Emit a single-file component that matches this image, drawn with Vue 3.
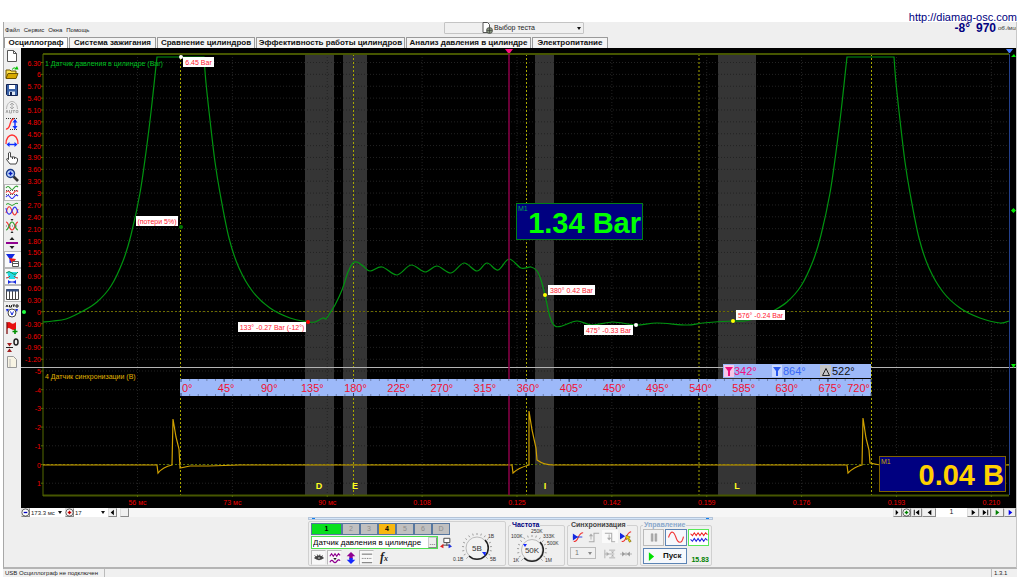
<script setup>
import { ref } from 'vue'

const menu = ['Файл', 'Сервис', 'Окна', 'Помощь']
const tabs = [
  { t: 'Осциллограф', w: 64 },
  { t: 'Система зажигания', w: 87 },
  { t: 'Сравнение цилиндров', w: 98 },
  { t: 'Эффективность работы цилиндров', w: 149 },
  { t: 'Анализ давления в цилиндре', w: 125 },
  { t: 'Электропитание', w: 76 },
]
const activeTab = ref(0)
const sensor = ref('Датчик давления в цилиндре')

/* icon parts: d = path, s = stroke, f = fill, w = stroke width, a = dash array */
const tools = [
  { n: 'Новый', p: [{ d: 'M2.5 1.5h6l3 3v8h-9z', s: '#555', f: '#fff' }, { d: 'M8.500 1.500v3h3', s: '#555' }] },
  { n: 'Открыть', p: [{ d: 'M1 4h4l1 1h5v7H1z', s: '#6b5200', f: '#ffe14a' }, { d: 'M1 12.500l2-5h10l-2 5z', s: '#6b5200', f: '#d8a800' }, { d: 'M7 3.500q2-3 4-1', s: '#00c000' }, { d: 'M9.500 3.500h4L12 0z', f: '#00c000' }] },
  { n: 'Сохранить', p: [{ d: 'M1.500 1.500h11v11h-10l-1-1z', s: '#102050', f: '#3a62a8' }, { d: 'M4 2h6v4H4z', f: '#fff' }, { d: 'M4 8.500h6V12H4z', f: '#dfe8f4' }, { d: 'M5 9h2v3H5z', f: '#102050' }] },
  { n: 'Авто', p: [{ d: 'M1.500 9C2-1 12-1 12.500 9', s: '#b5b5b5' }, { d: 'M7 3v6M5 5l2-2 2 2M5 7l2 2 2-2M1 13l1-3 1 3M4.500 10v3h2v-3M7.500 10.500h2.500M8.700 10v3M11 10.500h2v2h-2z', s: '#aaa' }] },
  { n: 'Амплитуда', p: [{ d: 'M1 12c5 1 3-10 8-10.500', s: '#ff3030', w: 1.4 }, { d: 'M1 1.500h12M5 12.500h8', s: '#333', a: '1 1' }, { d: 'M10 3v8', s: '#1030ff', w: 1.4 }, { d: 'M7.500 5.500L10 2l2.500 3.500zM7.500 9l2.500 3.500L12.500 9z', f: '#1030ff' }] },
  { n: 'Период', p: [{ d: 'M1 10C1-2 13-2 13 10', s: '#ff3030', w: 1.3 }, { d: 'M3 10.500h8', s: '#1030ff', w: 1.4 }, { d: 'M1.500 10.500l3-2.500v5zM12.500 10.500l-3-2.500v5z', f: '#1030ff' }] },
  { n: 'Рука', p: [{ d: 'M5 13L1.500 8.500q0-2 2 0V2q1.500-2 2 0v4q3-1 7 1.500V10l-1.500 3z', s: '#444', f: '#fff' }, { d: 'M7.500 6v2M9.500 6v2', s: '#444' }] },
  { n: 'Масштаб', p: [{ d: 'M8.500 8.500l4.500 4.500', s: '#333', w: 2.6 }, { d: 'M1.500 5.500a4 4 0 1 0 8 0a4 4 0 1 0-8 0z', s: '#1c3c88', f: '#c7dcff', w: 1.4 }, { d: 'M3.500 5.500h4M5.500 3.500v4', s: '#0018c0', w: 1.5 }] },
  { n: 'Линии', on: 1, p: [{ d: 'M1 3q2-3 4 0t4 0t4-1', s: '#30a030', w: 1.2 }, { d: 'M1 7.500q2-3 4 0t4 0t4-1', s: '#f03030', w: 1.2 }, { d: 'M1 12q2-3 4 0t4 0t4-1', s: '#3030f0', w: 1.2 }, { d: 'M1 5.500h12M1 9.500h12', s: '#555', a: '1 1' }] },
  { n: 'Наложение', p: [{ d: 'M1 2.500q2-2 4 0t4 0t4-1', s: '#30a030' }, { d: 'M1 11C3 3 5 3 7 9S11 14 13 7', s: '#f03030', w: 1.1 }, { d: 'M1 6C2 13 5 14 7 9S11 3 13 11', s: '#3030f0', w: 1.1 }] },
  { n: 'Центр', p: [{ d: 'M1 3C4 3 4 11 7 11S10 3 13 3', s: '#f03030', w: 1.2 }, { d: 'M1 11C4 11 4 3 7 3S10 11 13 11', s: '#30a030', w: 1.2 }, { d: 'M1 7h12', s: '#777', a: '1 1' }, { d: 'M5.500 0h3L7 2zM5.500 14h3L7 12z', f: '#222' }] },
  { n: 'Сдвиг', p: [{ d: 'M1 7h12', s: '#900090', w: 2 }, { d: 'M7 1L4.500 4h5zM4.500 10h5L7 13z', f: '#222' }] },
  { n: 'Фильтр', on: 1, p: [{ d: 'M1 1h9L6.500 6v4h-2V6z', f: '#1428e0' }, { d: 'M4 5l7 1-2 3 3 3-5-2z', f: '#f01818' }, { d: 'M7.500 8.500h6v5h-6zM7.500 10.500h6', s: '#555', f: '#fff' }] },
  { n: 'Сигнал', on: 1, p: [{ d: 'M2 2h10L10 9H4z', f: '#28dce6' }, { d: 'M1 3q3-3 6 0t6-1', s: '#0a9050' }, { d: 'M1 8q3 0 4-2M13 8q-3 0-4-2', s: '#d02020' }, { d: 'M5 12h4', s: '#1428e0' }, { d: 'M3 10l3 2-3 2zM11 10l-3 2 3 2z', f: '#1428e0' }] },
  { n: 'Таблица', on: 1, p: [{ d: 'M1.500 2.500h12v10h-12zM4.500 4v8M7.500 4v8M10.500 4v8', s: '#444', f: '#fff' }, { d: 'M1.500 2h12v2.500h-12z', f: '#385080' }] },
  { n: 'Авто прибор', p: [{ d: 'M3 9a4 4 0 1 0 8 0a4 4 0 1 0-8 0z', s: '#444', f: '#fff' }, { d: 'M5.500 7.500L7 11l1.500-3.500', s: '#1428e0' }, { d: 'M1 3l1-2 1 2M4.500 1v2h2V1M7.500 1h2.500M8.700 1v2M11 1h2v2h-2z', s: '#222' }, { d: 'M2 8L1 5h3zM12 8l1-3h-3z', f: '#1428e0' }] },
  { n: 'Флаг', p: [{ d: 'M2 2q2-2 4 0t5-1v7q-2 2-5 0t-4 0z', f: '#e81010' }, { d: 'M2 1v12', s: '#801010', w: 1.3 }, { d: 'M10 8v5M7.500 10.500h5', s: '#009000', w: 1.6 }] },
  { n: 'Ноль', p: [{ d: 'M1 9.500h7', s: '#222' }, { d: 'M2 5h5L4.500 8.500zM2 14h5l-2.500-3.500z', f: '#a02020' }, { d: 'M9 4q0-3 2-3t2 3-2 3-2-3z', s: '#222', w: 1.5 }] },
  { n: 'Отчёт', p: [{ d: 'M2.500 1.500h6l3 3v8h-9z', s: '#999', f: '#f8f4e4' }, { d: 'M4 5h2M4 7h2M4 9h2M4 11h2', s: '#bbb' }] },
]

/* ---- oscillogram geometry ---- */
function smooth(p) {
  let d = `L${p[0]}`
  for (let i = 0; i < p.length - 1; i++) {
    const a = p[i - 1] || p[i], b = p[i], c = p[i + 1], e = p[i + 2] || c
    d += `C${b[0] + (c[0] - a[0]) / 6} ${b[1] + (c[1] - a[1]) / 6} ${c[0] - (e[0] - b[0]) / 6} ${c[1] - (e[1] - b[1]) / 6} ${c}`
  }
  return d
}
const rise = [[83, 311], [97, 302], [111, 286], [123, 261], [131, 235], [140, 193], [146, 152], [151, 112], [156, 66], [157, 57]]
const fall = [[204, 57], [206, 83], [210, 120], [215, 162], [220, 193], [229, 238], [239, 268], [253, 292], [270, 308], [290, 318], [308, 322]]
const mid = [[308, 322], [315, 322], [323, 318], [326, 319], [330, 313], [335, 305], [342, 290], [348, 272], [353, 263], [357, 262], [363, 266], [370, 271], [382, 267], [397, 275], [411, 265], [425, 272], [437, 266], [451, 273], [464, 263], [477, 271], [487, 263], [498, 270], [509, 259], [521, 268], [531, 267], [537, 271], [541, 280], [545, 295], [550, 317], [555, 326], [562, 326], [577, 321], [592, 325], [613, 322], [636, 325], [657, 323], [687, 325], [703, 323], [733, 321], [745, 321], [760, 317], [773, 311]]
const sh = (a, n) => a.map(([x, y]) => [x + n, y])
const pressure =
  'M43 322' + smooth([[43, 322], [53, 321], [66, 319], ...rise]) + smooth(fall) + smooth(mid) +
  smooth(sh(rise, 690)) + smooth([...sh(fall.slice(0, -2), 690), [980, 318], [1000, 323], [1009, 321]])
const sync =
  'M43 465H157L158 473Q163 467 172 465L173 419L176 437L179 449L180 468L190 466H208L240 465H512L513 473Q518 468 529 465V411L532 430L536 448L537 460Q544 465 553 465H847L848 473Q854 467 862 465L863 418L866 438L869 450L870 463L880 465H1009'

const yTop = Array.from({ length: 26 }, (_, i) => {
  const v = Math.round((6.3 - i * 0.3) * 100) / 100
  return { y: 62.5 + i * 11.87, t: Number.isInteger(v) ? String(Math.abs(v)) : v.toFixed(2) }
})
const yLow = [-5, -4, -3, -2, -1, 0, 1].map((t, i) => ({ t, y: 371 + i * 18.7 }))
const xs = ['56 мс', '73 мс', '90 мс', '0.108', '0.125', '0.142', '0.159', '0.176', '0.193', '0.210'].map((t, i) => ({ t, x: 137.5 + i * 94.87 }))
const bands = [
  { x: 305, w: 29, t: 'D', c: 319 },
  { x: 343, w: 24, t: 'E', c: 355 },
  { x: 535, w: 19, t: 'I', c: 545 },
  { x: 718, w: 38, t: 'L', c: 737 },
]
const phases = [180.5, 353.5, 526.5, 699, 871.5]
const degs = Array.from({ length: 17 }, (_, i) => ({ t: i * 45 + '°', x: 181 + i * 43.13 }))
const ticks = Array.from({ length: 79 }, (_, i) => 181 + (i + 1) * 8.626)
const notes = [
  { x: 183, y: 57, w: 31, t: '6.45 Bar' },
  { x: 136, y: 216, w: 42, t: '(потери 5%)' },
  { x: 238, y: 322, w: 68, t: '133° -0.27 Bar (-12°)' },
  { x: 548, y: 285, w: 47, t: '380° 0.42 Bar' },
  { x: 584, y: 325, w: 49, t: '475° -0.33 Bar' },
  { x: 736, y: 310, w: 49, t: '576° -0.24 Bar' },
]
const dots = [
  [181, 57, '#fff'], [181, 227, '#007800'], [308, 322, '#f00'], [545, 295, '#ff0'], [636, 325, '#fff'], [733, 321, '#ff0'],
]

/* ---- bottom panel ---- */
const channels = [1, 2, 3, 4, 5, 6, 'D']
const views = [
  { n: 'Показать', p: [{ d: 'M1 7q6-6 12 0q-6 5-12 0z', f: '#444' }, { d: 'M2 4l2 2M5 3l1 2M8 3v2M11 4l-1 2', s: '#222' }, { d: 'M6 7h2', s: '#fff' }], on: 1 },
  { n: 'Фильтр', p: [{ d: 'M1 5l2-3 2 3 2-3 2 3 2-3 2 2M1 12q2-4 4-1t4 0 4-1', s: '#900090', w: 1.4 }, { d: 'M5 7h4l-2 2.500z', f: '#222' }], on: 1 },
  { n: 'Инверсия', p: [{ d: 'M7 0l5 5H9v3H5V5H2z', f: '#900090' }, { d: 'M7 14l5-5H9V7H5v2H2z', f: '#1428ff' }] },
  { n: 'Линии', p: [{ d: 'M1 2.500h12M1 12.500h12', s: '#555' }, { d: 'M1 7.500h12', s: '#555', a: '1 1' }], on: 1 },
]
const syncIcons = [
  { n: 'Фронт', p: [{ d: 'M2 12C8 14 6 2 13 2', s: '#f03030', w: 1.2 }, { d: 'M1 7h11', s: '#1428e0' }, { d: 'M1 3l6 4-6 4z', f: '#1428e0' }] },
  { n: 'По возрастанию', p: [{ d: 'M1 12.500h6v-10h6', s: '#aaa', w: 1.2 }, { d: 'M3.500 5v5', s: '#aaa' }, { d: 'M1 6l2.500-3L6 6z', f: '#aaa' }] },
  { n: 'По спаду', on: 1, p: [{ d: 'M1 2.500h8v10h4', s: '#aaa', w: 1.2 }, { d: 'M6 4v5', s: '#aaa' }, { d: 'M3.500 8L6 11l2.500-3z', f: '#aaa' }] },
  { n: 'Выбор', p: [{ d: 'M2 12C8 14 6 2 13 1', s: '#f03030', w: 1.2 }, { d: 'M0 2l6 4-6 4z', f: '#1428e0' }, { d: 'M7 5l5 2-2 1 3 4-2 1-2-4-2 1z', s: '#665500', f: '#ffe000', w: 0.7 }] },
]
const shiftIcons = [
  { n: 'Уровень', p: [{ d: 'M1 2v10M1 7h11M6 2.500h7M6 11.500h7', s: '#aaa' }, { d: 'M3 4.500v5L6 7zM8 4h4l-2 2zM8 10h4l-2-2z', f: '#aaa' }] },
  { n: 'Смещение', p: [{ d: 'M0 7h14M7 5v4', s: '#aaa' }, { d: 'M6 7L2.500 4v6zM8 7l3.500-3v6z', f: '#999' }] },
]
function dial(from, to, n, r1, r2) {
  let d = ''
  for (let i = 0; i <= n; i++) {
    const a = ((from + ((to - from) * i) / n) * Math.PI) / 180
    d += `M${Math.cos(a) * r1} ${Math.sin(a) * r1}L${Math.cos(a) * r2} ${Math.sin(a) * r2}`
  }
  return d
}
const dialMarks = dial(-225, 45, 16, 13, 15)
const nav = [
  { n: 'Вправо', w: 9, d: 'M3 2l3 3-3 3z', c: '#000' },
  { n: 'Метка', w: 9, ring: 1 },
  { n: 'В начало', w: 11, d: 'M2 2h1v6H2zM8 2v6L4 5z', c: '#000' },
  { n: 'Назад', w: 14, d: 'M7 2v6L3 5z', c: '#000' },
]
const nav2 = [
  { n: 'Вперёд', w: 12, d: 'M3 2v6l4-3z', c: '#000' },
  { n: 'В конец', w: 12, d: 'M2 2v6l4-3zM7 2h1v6H7z', c: '#000' },
  { n: 'Воспроизвести', w: 13, d: 'M3 2v6l4-3z', c: '#008000' },
  { n: 'Воспроизвести всё', w: 12, d: 'M3 2v6l4-3z', c: '#0000f0' },
]
</script>

<template>
  <div class="page">
    <header class="brand"><a href="#">http://diamag-osc.com</a></header>
    <main class="win">
      <div class="head">
        <nav class="menu"><button v-for="m in menu" :key="m">{{ m }}</button></nav>
        <label class="test">
          <svg viewBox="0 0 12 12" class="i12"><path d="M2 .5h4.500l2 2v8H2z" fill="#fff" stroke="#555" /><circle cx="8.500" cy="8.500" r="3" fill="#8a9a80" stroke="#444" stroke-width=".8" /><path d="M6 8.500h5M8.500 6v5" stroke="#333" stroke-width=".6" /></svg>
          <select aria-label="Выбор теста"><option>Выбор теста</option></select>
          <i class="caret"></i>
        </label>
        <div class="rpm"><b>-8°</b><b>970</b><span>об./мин</span></div>
      </div>
      <div class="tabs" role="tablist">
        <button v-for="(t, i) in tabs" :key="t.t" role="tab" :class="{ on: i === activeTab }" :style="{ width: t.w + 'px' }" @click="activeTab = i">{{ t.t }}</button>
      </div>

      <section class="work">
        <aside class="tools">
          <button v-for="t in tools" :key="t.n" :class="{ on: t.on }" :aria-label="t.n">
            <svg viewBox="0 0 14 14"><path v-for="(p, k) in t.p" :key="k" :d="p.d" :stroke="p.s || 'none'" :fill="p.f || 'none'" :stroke-width="p.w || 1" :stroke-dasharray="p.a" /></svg>
          </button>
        </aside>
        <div class="stage">
          <svg class="scope" viewBox="21 48 995 460" role="img" aria-label="Осциллограмма">
            <rect x="21" y="48" width="995" height="460" fill="#000" />
            <rect v-for="b in bands" :key="b.t" :x="b.x" y="54" :width="b.w" height="442" fill="#353535" />
            <g stroke="#232323" stroke-dasharray="1 2">
              <path v-for="l in yTop" :key="'a' + l.y" :d="`M43 ${l.y}H1009`" />
              <path v-for="l in yLow" :key="'b' + l.y" :d="`M43 ${l.y}H1009`" />
              <path v-for="l in xs" :key="'c' + l.x" :d="`M${l.x} 54V495`" />
            </g>
            <path d="M43 311.500H1009" stroke="#6c6c00" stroke-dasharray="2 2" />
            <path d="M43 464.500H1009" stroke="#5a6c00" stroke-dasharray="2 2" />
            <path v-for="x in phases" :key="x" :d="`M${x} 54V495`" stroke="#a8a800" stroke-dasharray="2 2" />
            <path d="M43 54H1009M43 495.500H1009" stroke="#465600" stroke-width="2" />
            <path d="M43 54V496" stroke="#556b00" stroke-width="1" />
            <g stroke="#556b00">
              <path v-for="l in yTop" :key="'t' + l.y" :d="`M41 ${l.y}h2`" />
              <path v-for="l in yLow" :key="'u' + l.y" :d="`M41 ${l.y}h2`" />
              <path v-for="l in xs" :key="'v' + l.x" :d="`M${l.x} 495v2`" />
            </g>
            <g class="axis">
              <text v-for="l in yTop" :key="l.y" x="41" :y="l.y + 3" text-anchor="end">{{ l.t }}</text>
              <text v-for="l in yLow" :key="l.y" x="41" :y="l.y + 3" text-anchor="end">{{ l.t }}</text>
              <text v-for="l in xs" :key="l.x" :x="l.x" y="505" text-anchor="middle">{{ l.t }}</text>
            </g>
            <text class="title" x="45" y="66" fill="#00c020">1 Датчик давления в цилиндре (Bar)</text>
            <text class="title" x="45" y="379" fill="#e0b400">4 Датчик синхронизации (В)</text>
            <path :d="pressure" fill="none" stroke="#009410" stroke-width="1.200" />
            <path :d="sync" fill="none" stroke="#cfa000" stroke-width="1.200" />
            <path d="M21 367.500H1016" stroke="#b4b4b4" />
            <path d="M509 54V495" stroke="#8c0048" stroke-width="1.500" />
            <path d="M505 49h8l-3 4h-2z" fill="#ff1080" />
            <path d="M1009.500 54V495" stroke="#24408c" />
            <path d="M1006 49h7l-3 4h-1z" fill="#4880ff" />
            <path d="M1011 57h5l-2-3zM1011 364h5l-2.500 4zM1011 210.500l2.500-2.500 2.500 2.500-2.500 2.500z" fill="#00e800" />
            <circle cx="24" cy="312" r="2" fill="#20ff40" />
            <g class="zone"><text v-for="b in bands" :key="b.t" :x="b.c" y="489" text-anchor="middle">{{ b.t }}</text></g>

            <rect x="180" y="379" width="691" height="17" fill="#9db9f9" />
            <path v-for="x in ticks" :key="x" :d="`M${x} 379v2M${x} 394v2`" stroke="#6c7fae" />
            <path v-for="d in degs" :key="'d' + d.t" :d="`M${d.x} 379v3M${d.x} 393v3`" stroke="#304070" />
            <g class="deg">
              <text v-for="(d, i) in degs" :key="d.t" :x="i === 0 ? 182 : i === 16 ? 870 : d.x + 2" y="392" :text-anchor="i === 0 ? 'start' : i === 16 ? 'end' : 'middle'">{{ d.t }}</text>
            </g>
            <rect x="723" y="364" width="148" height="14" fill="#9db9f9" />
            <rect x="724" y="365" width="10" height="12" fill="#f6c8e8" />
            <rect x="772" y="365" width="10" height="12" fill="#c8d8ff" />
            <rect x="820" y="365" width="11" height="12" fill="#c4c4c4" />
            <path d="M725 367h8l-3 4v5h-2v-5z" fill="#f01080" />
            <path d="M773 367h8l-3 4v5h-2v-5z" fill="#2858f0" />
            <path d="M822.500 375.500h7l-3.500-7z" fill="none" stroke="#222" />
            <g class="deg">
              <text x="734" y="375" class="pink">342°</text>
              <text x="783" y="375" class="blue">864°</text>
              <text x="832" y="375" class="dark">522°</text>
            </g>

            <g v-for="n in notes" :key="n.t">
              <rect :x="n.x" :y="n.y" :width="n.w" height="10" fill="#fff" />
              <text class="note" :x="n.x + n.w / 2" :y="n.y + 8" text-anchor="middle">{{ n.t }}</text>
            </g>
            <circle v-for="d in dots" :key="d[0] + d[1]" :cx="d[0]" :cy="d[1]" r="2" :fill="d[2]" />

            <rect x="516.500" y="203.500" width="126" height="36" fill="#000080" stroke="#008018" />
            <text class="m1" x="518" y="211" fill="#00a850">M1</text>
            <text class="big" x="641" y="233" text-anchor="end" fill="#00ff00">1.34 Bar</text>
            <rect x="879.500" y="456.500" width="126" height="35" fill="#000080" stroke="#806400" />
            <text class="m1" x="881" y="464" fill="#c8a800">M1</text>
            <text class="big" x="1004" y="485" text-anchor="end" fill="#ffd000">0.04 В</text>
          </svg>

          <div class="strip">
            <button class="sq" aria-label="Уменьшить"><svg viewBox="0 0 10 10"><circle cx="5" cy="5" r="4" fill="#fff" stroke="#333" stroke-width=".8" /><path d="M3 5h4" stroke="#0000c0" stroke-width="1.500" /></svg></button>
            <span class="pick w36"><select aria-label="Развёртка"><option>173.3 мс</option></select><i class="caret"></i></span>
            <button class="sq" aria-label="Увеличить"><svg viewBox="0 0 10 10"><circle cx="5" cy="5" r="4" fill="#fff" stroke="#333" stroke-width=".8" /><path d="M3 5h4M5 3v4" stroke="#c00000" stroke-width="1.500" /></svg></button>
            <span class="pick w34"><select aria-label="Деление"><option>17</option></select><i class="caret"></i></span>
            <button class="sq" aria-label="Влево"><svg viewBox="0 0 10 10"><path d="M6.500 2v6L3 5z" /></svg></button>
            <div class="track"><button class="thumb" aria-label="Прокрутка"></button></div>
            <button v-for="b in nav" :key="b.n" class="sq" :style="{ width: b.w + 'px' }" :aria-label="b.n">
              <svg viewBox="0 0 10 10"><path v-if="b.d" :d="b.d" :fill="b.c" /><template v-else><circle cx="5" cy="5" r="4" fill="#fff" stroke="#333" stroke-width=".8" /><path d="M5 3v4M3 5h4" stroke="#008000" stroke-width="1.500" /></template></svg>
            </button>
            <output class="pageno">1</output>
            <button v-for="b in nav2" :key="b.n" class="sq" :style="{ width: b.w + 'px' }" :aria-label="b.n"><svg viewBox="0 0 10 10"><path :d="b.d" :fill="b.c" /></svg></button>
          </div>
        </div>
      </section>

      <section class="dock">
        <div class="grip"><i></i><i></i></div>
        <div class="groups">
          <fieldset class="chan">
            <div class="left">
              <div class="nums"><button v-for="c in channels" :key="c" :class="'c' + c">{{ c }}</button></div>
              <div class="sensor">
                <div class="field"><input v-model="sensor" aria-label="Датчик" /><button aria-label="Выбрать датчик">...</button></div>
                <svg viewBox="0 0 14 14" class="i12"><path d="M4.500 1.500h7v5h-7zM3 9.500h9M8 7v3" fill="#fff" stroke="#333" /><path d="M0 11l4-3v5z" fill="#e02020" /><path d="M14 11l-4-3v5z" fill="#2030e0" /></svg>
              </div>
              <div class="row">
                <button v-for="t in views" :key="t.n" :class="{ on: t.on }" :aria-label="t.n"><svg viewBox="0 0 14 14" class="i12"><path v-for="(p, k) in t.p" :key="k" :d="p.d" :stroke="p.s || 'none'" :fill="p.f || 'none'" :stroke-width="p.w || 1" :stroke-dasharray="p.a" /></svg></button>
                <button class="fx"><i>f<small>x</small></i></button>
              </div>
            </div>
            <label class="knob">
              <svg viewBox="-24 -20 50 38">
                <path :d="dialMarks" stroke="#888" stroke-width=".8" />
                <circle r="11" fill="#f2f2f2" stroke="#bbb" />
                <path d="M-8 8A11 11 0 0 0 8-8" fill="none" stroke="#222" stroke-width="1.500" />
                <text class="val" y="3" text-anchor="middle">5В</text>
                <path d="M5 4l4 0-1 4z" fill="#1428ff" />
                <text x="11" y="-10">1В</text><text x="13" y="13">5В</text><text x="-24" y="13">0.1В</text>
              </svg>
              <input type="range" aria-label="Предел" />
            </label>
          </fieldset>
          <fieldset>
            <legend class="navy">Частота</legend>
            <label class="knob">
              <svg viewBox="-27 -21 56 36">
                <path :d="dialMarks" stroke="#888" stroke-width=".8" />
                <circle r="10.500" fill="#f2f2f2" stroke="#bbb" />
                <path d="M-8 8A11 11 0 0 0 8-8" fill="none" stroke="#222" stroke-width="1.500" />
                <text class="val" y="3" text-anchor="middle">50K</text>
                <path d="M-9-6h4l-2 3z" fill="#1428ff" />
                <text x="-21" y="-12">100K</text><text x="-1" y="-17">250K</text><text x="11" y="-12">333K</text><text x="15" y="-5">500K</text><text x="-19" y="12">1K</text><text x="13" y="12">1M</text>
              </svg>
              <input type="range" aria-label="Частота" />
            </label>
          </fieldset>
          <fieldset>
            <legend>Синхронизация</legend>
            <div class="grid4">
              <button v-for="t in syncIcons" :key="t.n" :class="{ lit: t.on }" :aria-label="t.n"><svg viewBox="0 0 14 14" class="i12"><path v-for="(p, k) in t.p" :key="k" :d="p.d" :stroke="p.s || 'none'" :fill="p.f || 'none'" :stroke-width="p.w || 1" /></svg></button>
              <span class="pick num"><select aria-label="Канал"><option>1</option></select><i class="caret"></i></span>
              <button v-for="t in shiftIcons" :key="t.n" :aria-label="t.n"><svg viewBox="0 0 14 14" class="i12"><path v-for="(p, k) in t.p" :key="k" :d="p.d" :stroke="p.s || 'none'" :fill="p.f || 'none'" /></svg></button>
            </div>
          </fieldset>
          <fieldset>
            <legend class="pale">Управление</legend>
            <div class="ctrl">
              <button class="dim" aria-label="Пауза"><svg viewBox="0 0 18 16"><path d="M6 4h2v8H6zM10 4h2v8h-2z" fill="#aaa" stroke="#999" stroke-width=".5" /></svg></button>
              <button class="blueb" aria-label="Синус"><svg viewBox="0 0 18 16"><path d="M1 8C4-1 7 2 9 8s6 8 8-1" fill="none" stroke="#f03838" stroke-width="1.200" /></svg></button>
              <button class="greenb" aria-label="Каналы"><svg viewBox="0 0 18 16"><path d="M0 4l2 2 2-3 2 3 2-3 2 3 2-3 2 3 2-3 2 2" fill="none" stroke="#f02020" stroke-width="1.100" /><path d="M0 10l2 2 2-3 2 3 2-3 2 3 2-3 2 3 2-3 2 2" fill="none" stroke="#2020e0" stroke-width="1.100" /></svg></button>
              <button class="blueb start"><svg viewBox="0 0 8 10"><path d="M1 0l6 5-6 5z" fill="#00e000" /></svg>Пуск</button>
              <b class="fps">15.83</b>
            </div>
          </fieldset>
        </div>
      </section>
    </main>
    <footer class="status"><span>USB Осциллограф не подключен</span><span>1.3.1</span></footer>
  </div>
</template>

<style>
html, body { background: #fff; }
</style>

<style scoped>
.page { font: 7px/8px "Liberation Sans", Arial, sans-serif; color: #222; padding: 0 7px 3px 3px; }
.page * { box-sizing: border-box; }
button { font: inherit; color: inherit; padding: 0; margin: 0; border: 0; background: none; display: flex; align-items: center; justify-content: center; }
svg { display: block; }
select { font: inherit; color: inherit; appearance: none; border: 0; background: none; padding: 0; margin: 0; width: 100%; outline: 0; }
.i12 { width: 12px; height: 12px; flex: none; }
.caret { width: 0; height: 0; border: 2px solid transparent; border-top: 3px solid #111; border-bottom: 0; flex: none; }

.brand { height: 22px; display: flex; justify-content: flex-end; align-items: flex-end; }
.brand a { font-size: 11px; line-height: 10px; color: #000080; text-decoration: none; }
.win { background: #efefef; border-left: 1px solid #a8a8a8; border-right: 1px solid #c8c8c8; border-bottom: 2px solid #b4b4b4; }
.head { display: grid; grid-template-columns: 1fr 140px 1fr; height: 15px; }
.menu { display: flex; gap: 4px; align-items: flex-end; padding: 0 0 3px 1px; font-size: 6px; }
.menu button { line-height: 8px; }
.test { display: flex; align-items: center; height: 12px; margin-left: 4px; margin-right: -4px; border: 1px solid #c4c4c4; border-radius: 1px; padding: 0 2px 0 36px; background: #f0f0f0; font-size: 7px; gap: 1px; }
.rpm { display: flex; justify-content: flex-end; align-items: center; color: #000080; font-size: 12px; line-height: 12px; gap: 6px; height: 12px; white-space: nowrap; }
.rpm span { font-size: 6px; color: #333; width: 18px; overflow: hidden; margin-left: -4px; font-style: italic; }

.tabs { display: flex; align-items: flex-end; height: 11px; gap: 1px; }
.tabs button { height: 11px; font-weight: bold; font-size: 8px; white-space: nowrap; border: 1px solid #9a9a9a; border-bottom: 0; border-radius: 1px 1px 0 0; background: #f4f4f4; color: #111; }
.tabs .on { background: #fff; }

.work { display: flex; }
.tools { width: 17px; height: 322px; display: grid; grid-template-rows: repeat(19, 1fr); flex: none; }
.tools button { border-left: 1px solid transparent; justify-content: flex-start; }
.tools .on { background: #fafafa; border: 1px solid #b8b8b8; border-right: 0; }
.tools svg { width: 14px; height: 14px; flex: none; }
.stage { flex: 1; min-width: 0; }
.scope { width: 100%; height: auto; }
.axis text { font-size: 7px; fill: #f40000; }
.title { font-size: 7px; }
.zone text { font-size: 9px; font-weight: bold; fill: #ffff20; }
.deg text { font-size: 11px; fill: #f01030; }
.deg .pink { fill: #f01080; }
.deg .blue { fill: #3868f8; }
.deg .dark { fill: #111; }
.note { font-size: 7px; fill: #ff1830; }
.m1 { font-size: 7px; }
.big { font-size: 29px; font-weight: bold; }

.strip { display: flex; height: 9px; background: #fff; }
.sq { width: 9px; height: 9px; background: #f0f0f0; border: 1px solid #ddd; border-right-color: #888; border-bottom-color: #888; flex: none; }
.sq svg { width: 9px; height: 9px; flex: none; }
.pick { display: flex; align-items: center; padding: 0 3px 0 1px; background: #fff; }
.w36 { width: 35px; font-size: 6px; }
.w34 { width: 34px; font-size: 6px; }
.track { flex: 1; background: #f6f6f6; padding-left: 3px; }
.thumb { width: 9px; height: 9px; border: 1px solid #ddd; border-right-color: #888; border-bottom-color: #888; background: #f0f0f0; }
.pageno { width: 31px; text-align: center; }

.dock { display: flex; flex-direction: column; align-items: center; height: 50px; }
.grip { width: 405px; height: 3px; border: 1px solid #b4c4d8; background: #d4e6fa; display: flex; justify-content: space-between; padding: 0 3px; }
.grip i { width: 3px; height: 1px; background: #1080f0; }
.groups { display: grid; grid-template-columns: 198px 57px 71px 72px; gap: 2px; width: 404px; height: 45px; margin-top: 1px; }
fieldset { margin: 0; min-width: 0; padding: 0 2px; border: 1px solid #d0d0d0; border-radius: 2px; height: 45px; }
legend { font-weight: bold; font-size: 7px; line-height: 8px; padding: 0 1px; color: #444; }
.navy { color: #000080; }
.pale { color: #8aa8cc; }
.chan { display: flex; gap: 1px; }
.left { width: 141px; }
.nums { display: grid; grid-template-columns: 31px repeat(6, 18px); height: 12px; margin-top: 1px; }
.nums button { border: 1px solid #5878a0; background: #c0c0c0; color: #8c8c8c; font-size: 7px; }
.nums .c1 { background: #08e020; color: #000; font-weight: bold; }
.nums .c4 { background: #f8b810; color: #000; font-weight: bold; }
.sensor { display: flex; align-items: center; gap: 2px; margin-top: 1px; }
.field { display: flex; width: 128px; height: 13px; border: 1px solid #50e050; background: #fff; }
.field input { font: 8px/9px "Liberation Sans", Arial, sans-serif; border: 0; padding: 0 1px; flex: 1; min-width: 0; outline: 0; background: none; }
.field button { width: 9px; background: #eee; border: 1px solid #ccc; border-right-color: #888; border-bottom-color: #888; line-height: 4px; }
.row { display: flex; gap: 1px; margin-top: 1px; }
.row button { width: 15px; height: 15px; border: 1px solid transparent; }
.row .on { background: #f8f8f8; border-color: #bbb #eee #eee #bbb; }
.fx { font: bold 12px/12px "Liberation Serif", serif; padding-left: 3px; }
.fx small { font-size: 8px; }
.knob { position: relative; display: block; }
.chan .knob { width: 50px; margin-top: 6px; }
.chan .knob svg { width: 50px; height: 38px; margin-left: 0; }
.knob svg { width: 56px; height: 36px; margin-left: -6px; overflow: visible; }
.knob text { font-size: 5px; fill: #333; }
.knob .val { font-size: 8px; }
.knob input { position: absolute; inset: 0; width: 100%; height: 100%; margin: 0; opacity: 0; }
.grid4 { display: grid; grid-template-columns: repeat(4, 16px); row-gap: 4px; padding-top: 1px; }
.grid4 button { height: 13px; }
.lit { background: #fafafa; }
.num { grid-column: span 2; width: 26px; height: 12px; border: 1px solid #bbb; background: #f0f0f0; color: #777; padding-left: 4px; }
.num .caret { border-top-color: #888; }
.ctrl { display: grid; grid-template-columns: 21px 22px 21px; gap: 2px 1px; }
.ctrl button { height: 17px; border: 1px solid #bbb; background: #f2f2f2; }
.ctrl svg { width: 18px; height: 15px; }
.ctrl .blueb { border-color: #5c84b4; background: #f6f8fc; }
.ctrl .greenb { border-color: #58e858; background: #fff; }
.ctrl .start { grid-column: span 2; height: 16px; justify-content: flex-start; gap: 8px; padding-left: 4px; font-weight: bold; font-size: 8px; color: #111; }
.ctrl .start svg { width: 7px; height: 9px; }
.fps { color: #008000; font-size: 7px; align-self: end; text-align: right; }

.status { display: flex; justify-content: space-between; background: #f0f0f0; height: 8px; font-size: 6px; line-height: 8px; }
.status span:first-child { width: 102px; padding-left: 2px; border-right: 1px solid #bbb; }
.status span:last-child { width: 26px; padding-left: 2px; border-left: 1px solid #bbb; }
</style>
